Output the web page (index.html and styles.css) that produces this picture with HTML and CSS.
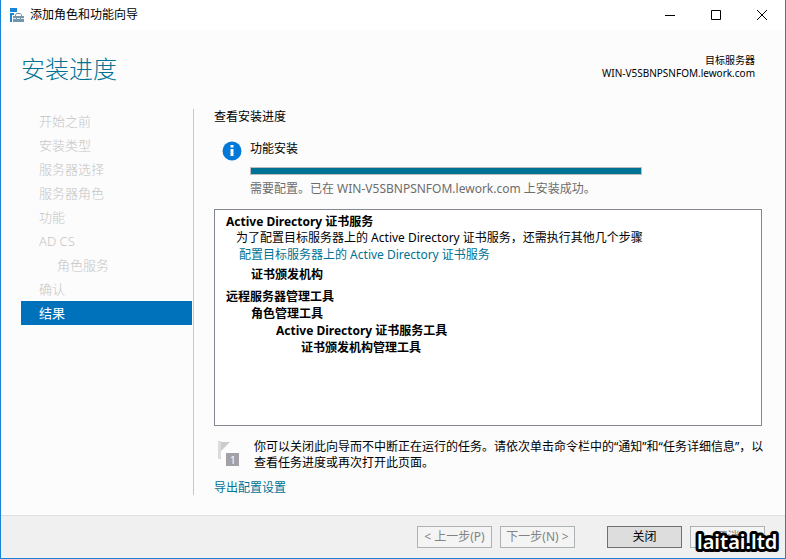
FILE: index.html
```html
<!DOCTYPE html>
<html lang="zh-CN">
<head>
  <meta charset="UTF-8">
  <meta name="viewport" content="width=device-width, initial-scale=1">
  <title>添加角色和功能向导</title>
  <link rel="stylesheet" href="styles.css">
</head>
<body>
  <div class="window">
    <header class="titlebar">
      <svg class="app-icon" width="15" height="14" viewBox="0 0 15 14">
        <path fill="#1a86d9" d="M1 0h7v4H1zM1 5h4v9H1z"/>
        <path fill="#fff" d="M3 7h2V5h8v2h2v7H3z"/>
        <path fill="#7396ab" d="M4 8h11v6H4z"/>
        <path fill="none" stroke="#7396ab" d="M6.500 8V7l1-1.500h4l1 1.500v1"/>
        <path stroke="#dfe8ee" d="M4 10.500h3M8 10.500h3M12 10.500h3"/>
      </svg>
      <span class="titlebar-text">添加角色和功能向导</span>
      <div class="window-controls">
        <button type="button" aria-label="最小化"><svg width="12" height="12" viewBox="0 0 12 12"><path d="M1 6.500h10"/></svg></button>
        <button type="button" aria-label="最大化"><svg width="12" height="12" viewBox="0 0 12 12"><path d="M1.500 1.500h9v9h-9z"/></svg></button>
        <button type="button" aria-label="关闭窗口"><svg width="12" height="12" viewBox="0 0 12 12"><path d="M1 1l10 10M11 1L1 11"/></svg></button>
      </div>
    </header>

    <div class="heading">
      <h1>安装进度</h1>
      <p class="target">目标服务器<br>WIN-V5SBNPSNFOM.lework.com</p>
    </div>

    <div class="content">
      <nav class="steps">
        <ul>
          <li>开始之前</li>
          <li>安装类型</li>
          <li>服务器选择</li>
          <li>服务器角色</li>
          <li>功能</li>
          <li>AD CS</li>
          <li class="sub">角色服务</li>
          <li>确认</li>
          <li class="active">结果</li>
        </ul>
      </nav>

      <main class="main">
        <h2>查看安装进度</h2>
        <section class="status">
          <svg class="info-icon" width="20" height="20" viewBox="0 0 20 20">
            <circle cx="10" cy="10" r="9.500" fill="#0078d7"/>
            <path fill="#fff" d="M8.500 4h3v2.500h-3zM8.500 8h3v7h-3z"/>
          </svg>
          <div class="status-body">
            <p>功能安装</p>
            <div class="progress" role="progressbar" aria-valuenow="100" aria-label="功能安装"></div>
            <p class="status-note">需要配置。已在 WIN-V5SBNPSNFOM.lework.com 上安装成功。</p>
          </div>
        </section>

        <section class="results">
          <h3>Active Directory 证书服务</h3>
          <p class="detail">为了配置目标服务器上的 Active Directory 证书服务，还需执行其他几个步骤</p>
          <a class="configure" href="#">配置目标服务器上的 Active Directory 证书服务</a>
          <h4>证书颁发机构</h4>
          <h3 class="group">远程服务器管理工具</h3>
          <h4>角色管理工具</h4>
          <h5>Active Directory 证书服务工具</h5>
          <h6>证书颁发机构管理工具</h6>
        </section>

        <section class="hint">
          <svg class="flag-icon" width="22" height="26" viewBox="0 0 22 26">
            <path fill="#dcdcdc" d="M0 0h3v18H0z"/>
            <path fill="#cccccc" d="M3 1h9L3 10z"/>
            <path fill="#a3a1a5" d="M8 12h13v13H8z"/>
            <text x="12" y="23">1</text>
          </svg>
          <p>你可以关闭此向导而不中断正在运行的任务。请依次单击命令栏中的“通知”和“任务详细信息”，以查看任务进度或再次打开此页面。</p>
        </section>
        <a class="export" href="#">导出配置设置</a>
      </main>
    </div>

    <footer class="footer">
      <div class="button-group">
        <button type="button" disabled>&lt; 上一步(P)</button>
        <button type="button" disabled>下一步(N) &gt;</button>
      </div>
      <div class="button-group">
        <button type="button" class="close">关闭</button>
        <button type="button" disabled>取消</button>
      </div>
    </footer>
    <svg class="watermark" width="92" height="34" viewBox="0 0 92 34"><text x="4" y="25">laitai.ltd</text></svg>
  </div>
</body>
</html>
```
FILE: styles.css
```css
* {
  box-sizing: border-box;
}
body, h1, h2, h3, h4, h5, h6, p, ul {
  margin: 0;
  padding: 0;
}
body {
  font-family: "Noto Sans", "Noto Sans CJK SC", sans-serif;
  font-size: 12px;
  line-height: 16px;
  color: #000;
}
a {
  color: #007294;
  text-decoration: none;
}
.window {
  position: relative;
  display: flex;
  flex-direction: column;
  min-height: 100vh;
  background: #fcfcfc;
  border: 1px solid #1883d7;
  border-top: none;
}

/* title bar */
.titlebar {
  display: flex;
  align-items: center;
  height: 30px;
  padding-left: 8px;
  background: #fff;
}
.titlebar-text {
  margin-left: 6px;
}
.window-controls {
  display: flex;
  margin-left: auto;
}
.window-controls button {
  display: flex;
  align-items: center;
  justify-content: center;
  width: 46px;
  height: 28px;
  padding: 0;
  border: none;
  background: none;
}
.window-controls path {
  fill: none;
  stroke: #000;
}

/* heading */
.heading {
  display: flex;
  justify-content: space-between;
  padding: 24px 30px 0 20px;
}
.heading h1 {
  font-size: 24px;
  font-weight: 300;
  line-height: 30px;
  color: #007294;
}
.target {
  font-size: 10px;
  line-height: 13px;
  text-align: right;
}

/* steps on the left */
.content {
  flex: 1;
  display: flex;
  padding: 25px 20px 20px;
}
.steps {
  width: 173px;
  padding-right: 1px;
  border-right: 1px solid #c8c8c8;
}
.steps li {
  padding-left: 18px;
  list-style: none;
  font-size: 13px;
  font-weight: 300;
  line-height: 24px;
  color: #c4c4c4;
}
.steps .sub {
  padding-left: 36px;
}
.steps .active {
  background: #0072bc;
  color: #fff;
  font-weight: 400;
}

/* main pane */
.main {
  flex: 1;
  display: flex;
  flex-direction: column;
  padding-left: 20px;
}
.main h2 {
  font-size: 12px;
  font-weight: 400;
  line-height: 16px;
}
.status {
  display: flex;
  gap: 8px;
  padding: 16px 0 12px 8px;
}
.status-body {
  width: 392px;
}
.progress {
  height: 8px;
  margin: 10px 0 6px;
  background: #007294;
  border: 1px solid #bcbcbc;
}
.status-note {
  color: #6d6d6d;
}
.results {
  flex: 1;
  margin-right: 3px;
  padding: 3px 11px;
  background: #fff;
  border: 1px solid #828790;
}
.results h3, .results h4, .results h5, .results h6 {
  font-size: 12px;
  font-weight: 700;
  line-height: 17px;
}
.results h4 {
  padding-left: 25px;
}
.results h5 {
  padding-left: 50px;
}
.results h6 {
  padding-left: 75px;
}
.detail {
  padding-left: 10px;
}
.configure {
  display: block;
  margin: 1px 0 3px 13px;
}
.results .group {
  margin-top: 5px;
}
.hint {
  display: flex;
  gap: 14px;
  padding: 13px 0 10px 4px;
}
.hint p {
  flex: 1;
}
.flag-icon {
  margin-top: 2px;
}
.flag-icon text {
  font-size: 10px;
  fill: #fff;
}
.export {
  align-self: flex-start;
  line-height: 14px;
}

/* footer */
.footer {
  display: flex;
  justify-content: flex-end;
  gap: 32px;
  padding: 10px 20px;
  background: #f0f0f0;
  border-top: 1px solid #dfdfdf;
}
.button-group {
  display: flex;
  gap: 8px;
}
.footer button {
  width: 75px;
  height: 22px;
  padding: 0;
  font: inherit;
  color: #838383;
  background: #f4f4f4;
  border: 1px solid #adb2b5;
}
.footer .close {
  color: #000;
  background: #ddd;
  border-color: #707070;
}
.watermark {
  position: absolute;
  right: 0;
  bottom: 0;
}
.watermark text {
  font-size: 20px;
  font-weight: 600;
  fill: #fff;
  stroke: #000;
  stroke-width: 6px;
  stroke-linejoin: round;
  paint-order: stroke;
}
```
